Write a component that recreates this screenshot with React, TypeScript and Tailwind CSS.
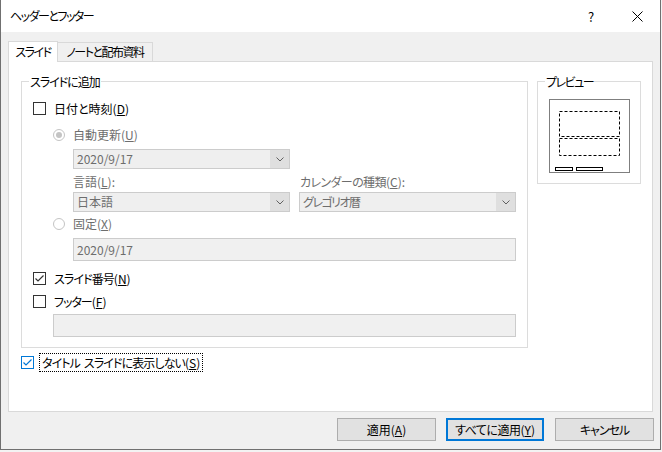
import React from "react";

function Chevron() {
  return (
    <svg width="8" height="5" viewBox="0 0 8 5" fill="none">
      <path d="M0.5 0.5L4 4L7.5 0.5" stroke="#606060" strokeWidth="1" />
    </svg>
  );
}

function M({ k }: { k: string }) {
  return (
    <span className="tracking-normal">
      (<u>{k}</u>)
    </span>
  );
}

function Combo({ value, cls }: { value: string; cls?: string }) {
  return (
    <div className="flex h-[20px] w-[217px] border border-[#cccccc] bg-[#efefef] text-[#6d6d6d]">
      <div className={"flex flex-1 items-center pl-[3px] " + (cls || "")}>{value}</div>
      <div className="flex w-[19px] items-center justify-center bg-[#dfdfdf]">
        <Chevron />
      </div>
    </div>
  );
}

function Check({ color }: { color: string }) {
  return (
    <svg width="11" height="11" viewBox="0 0 11 11" fill="none">
      <path d="M1.5 5.5L4 8L9.5 2.5" stroke={color} strokeWidth="1.2" />
    </svg>
  );
}

function Checkbox({ checked, blue }: { checked?: boolean; blue?: boolean }) {
  return (
    <div
      className={
        blue
          ? "flex h-[13px] w-[13px] shrink-0 items-center justify-center border border-[#0078d7] bg-white"
          : "flex h-[13px] w-[13px] shrink-0 items-center justify-center border border-[#333333] bg-white"
      }
    >
      {checked && <Check color={blue ? "#0078d7" : "#333333"} />}
    </div>
  );
}

function Radio({ checked }: { checked?: boolean }) {
  return (
    <div className="flex h-[12px] w-[12px] shrink-0 items-center justify-center rounded-full border border-[#c4c4c4] bg-white">
      {checked && <div className="h-[6px] w-[6px] rounded-full bg-[#c4c4c4]" />}
    </div>
  );
}

function Preview() {
  return (
    <svg width="81" height="74" viewBox="0 0 81 74" fill="none">
      <rect x="0.5" y="0.5" width="80" height="73" fill="white" stroke="#7f7f7f" />
      <rect x="10.5" y="12.5" width="60" height="25" stroke="black" strokeDasharray="3 2" />
      <rect x="10.5" y="39.5" width="60" height="17" stroke="black" strokeDasharray="3 2" />
      <rect x="6.5" y="68.5" width="17" height="3" fill="white" stroke="black" />
      <rect x="27.5" y="68.5" width="26" height="3" fill="white" stroke="black" />
    </svg>
  );
}

export default function App() {
  return (
    <div className="h-[452px] w-[662px] whitespace-nowrap bg-[#f3f3f3] text-[12px] leading-none text-black font-['Noto_Sans_CJK_JP','Noto_Sans',sans-serif] [font-feature-settings:'palt']">
      <div className="flex h-[450px] w-[661px] flex-col border-x border-b border-[#707070] bg-[#f0f0f0]">
        {/* title bar */}
        <div className="flex h-[32px] shrink-0 items-center bg-white">
          <div className="flex-1 pl-[9px] tracking-[-1.5px]">ヘッダーとフッター</div>
          <div className="flex h-full w-[46px] items-center justify-center text-[13px]">?</div>
          <div className="flex h-full w-[46px] items-center justify-center">
            <svg width="11" height="11" viewBox="0 0 11 11" fill="none">
              <path d="M0.5 0.5L10.5 10.5M10.5 0.5L0.5 10.5" stroke="black" strokeWidth="1" />
            </svg>
          </div>
        </div>

        {/* body */}
        <div className="flex flex-1 flex-col px-[7px] pt-[9px]">
          {/* tabs */}
          <div className="flex h-[20px] items-end">
            <div className="relative z-10 -mb-px flex h-[21px] w-[50px] items-center justify-center border-x border-t border-[#d9d9d9] bg-white tracking-[-1.5px]">
              スライド
            </div>
            <div className="flex h-[19px] w-[95px] items-center justify-center border-r border-t border-[#d9d9d9] tracking-[-1.5px]">
              ノートと配布資料
            </div>
          </div>

          {/* panel */}
          <div className="flex h-[351px] flex-col border border-[#d9d9d9] bg-white pl-[12px] pt-[19px]">
            <div className="flex items-start gap-[9px]">
              {/* main group */}
              <div className="flex h-[267px] w-[507px] flex-col border border-[#dcdcdc] pl-[11px]">
                <div className="-my-[8px] ml-[-4px] flex h-[16px] items-center self-start bg-white px-[1px] tracking-[-1px]">
                  スライドに追加
                </div>
                <div className="mt-[19px] flex h-[15px] items-center">
                  <Checkbox />
                  <span className="ml-[8px]">
                    日付と時刻<M k="D" />
                  </span>
                </div>
                <div className="ml-[20px] mt-[12px] flex h-[14px] items-center text-[#6d6d6d]">
                  <Radio checked />
                  <span className="ml-[8px]">
                    自動更新<M k="U" />
                  </span>
                </div>
                <div className="ml-[40px] mt-[7px]">
                  <Combo value="2020/9/17" />
                </div>
                <div className="ml-[40px] mt-[6px] flex h-[14px] items-center gap-[10px] text-[#6d6d6d]">
                  <span className="w-[217px]">
                    言語<M k="L" />:
                  </span>
                  <span className="tracking-[-0.6px]">
                    カレンダーの種類<M k="C" />:
                  </span>
                </div>
                <div className="ml-[40px] mt-[3px] flex gap-[9px]">
                  <Combo value="日本語" />
                  <Combo value="グレゴリオ暦" cls="tracking-[-1.5px]" />
                </div>
                <div className="ml-[20px] mt-[5px] flex h-[14px] items-center text-[#6d6d6d]">
                  <Radio />
                  <span className="ml-[8px]">
                    固定<M k="X" />
                  </span>
                </div>
                <div className="ml-[40px] mt-[7px] flex h-[23px] w-[443px] items-center border border-[#cccccc] bg-[#f0f0f0] pl-[3px] text-[#6d6d6d]">
                  2020/9/17
                </div>
                <div className="mt-[10px] flex h-[15px] items-center">
                  <Checkbox checked />
                  <span className="ml-[8px] tracking-[-0.9px]">
                    スライド番号<M k="N" />
                  </span>
                </div>
                <div className="mt-[8px] flex h-[15px] items-center">
                  <Checkbox />
                  <span className="ml-[8px] tracking-[-1px]">
                    フッター<M k="F" />
                  </span>
                </div>
                <div className="ml-[20px] mt-[5px] h-[23px] w-[463px] border border-[#cccccc] bg-[#f0f0f0]" />
              </div>

              {/* preview group */}
              <div className="flex h-[103px] w-[104px] flex-col border border-[#dcdcdc] pl-[11px]">
                <div className="-my-[8px] ml-[-4px] flex h-[16px] items-center self-start bg-white px-[1px] tracking-[-1.5px]">
                  プレビュー
                </div>
                <div className="mt-[17px] flex">
                  <Preview />
                </div>
              </div>
            </div>

            {/* title slide row */}
            <div className="mt-[5px] flex h-[19px] items-center">
              <Checkbox checked blue />
              <div className="ml-[5px] flex h-[19px] items-center border border-dotted border-black px-[2px] tracking-[-0.9px]">
                <span>タイトル</span>
                <span className="ml-[4px]">スライドに表示しない</span>
                <M k="S" />
              </div>
            </div>
          </div>

          {/* buttons */}
          <div className="mr-[-1px] mt-[6px] flex justify-end">
            <div className="mr-[10px] flex h-[23px] w-[99px] items-center justify-center border border-[#adadad] bg-[#e1e1e1]">
              適用<M k="A" />
            </div>
            <div className="mr-[11px] flex h-[23px] w-[98px] items-center justify-center border-2 border-[#0078d7] bg-[#e1e1e1] tracking-[-0.5px]">
              すべてに適用<M k="Y" />
            </div>
            <div className="flex h-[23px] w-[99px] items-center justify-center border border-[#adadad] bg-[#e1e1e1] tracking-[-1px]">
              キャンセル
            </div>
          </div>
        </div>
      </div>
    </div>
  );
}
